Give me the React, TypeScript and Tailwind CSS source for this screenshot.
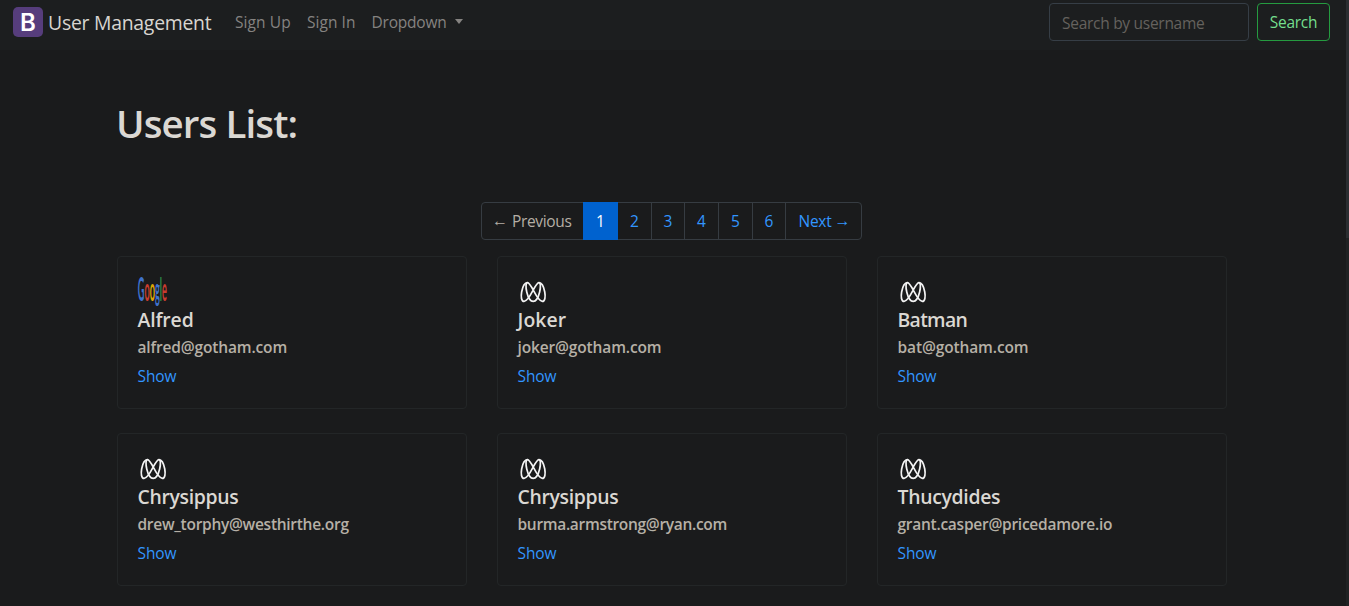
import React from 'react';

type User = { name: string; nameTracking: string; email: string; emailTracking: string; google?: boolean };

const users: User[] = [
  { name: 'Alfred', nameTracking: 'tracking-[-0.13px]', email: 'alfred@gotham.com', emailTracking: 'tracking-[-0.15px]', google: true },
  { name: 'Joker', nameTracking: 'tracking-[0.1px]', email: 'joker@gotham.com', emailTracking: 'tracking-[-0.14px]' },
  { name: 'Batman', nameTracking: 'tracking-[-0.7px]', email: 'bat@gotham.com', emailTracking: 'tracking-[-0.12px]' },
  { name: 'Chrysippus', nameTracking: 'tracking-[-0.32px]', email: 'drew_torphy@westhirthe.org', emailTracking: 'tracking-[-0.28px]' },
  { name: 'Chrysippus', nameTracking: 'tracking-[-0.32px]', email: 'burma.armstrong@ryan.com', emailTracking: 'tracking-[-0.31px]' },
  { name: 'Thucydides', nameTracking: 'tracking-[-0.31px]', email: 'grant.casper@pricedamore.io', emailTracking: 'tracking-[-0.26px]' },
];

function LoopLogo() {
  return (
    <svg viewBox="0 0 30 30" className="block h-[30px] w-[30px]" fill="none" stroke="#f4f4f4" strokeWidth="1.7">
      <path d="M9.5 5.6C13.5 5.6 18.5 24.4 24.3 24.4C29.8 24.4 26.5 5.6 20.9 5.6C16.9 5.6 11.9 24.4 6.1 24.4C.6 24.4 3.9 5.6 9.5 5.6Z" />
      <path d="M9.5 5.6C5.9 5.6 9.2 24.4 15.2 24.4C21.2 24.4 24.5 5.6 20.9 5.6" />
    </svg>
  );
}

function GoogleLogo() {
  return (
    <svg viewBox="0 0 30 30" className="block h-[30px] w-[30px] overflow-visible">
      <text transform="translate(-0.2 23.6) scale(0.285 1)" fontFamily="Lato, sans-serif" fontWeight="700" fontSize="32">
        <tspan fill="#3f73cc">G</tspan>
        <tspan fill="#c93d2f">o</tspan>
        <tspan fill="#d9a406">o</tspan>
        <tspan fill="#3f73cc">g</tspan>
        <tspan fill="#2f9148">l</tspan>
        <tspan fill="#c93d2f">e</tspan>
      </text>
    </svg>
  );
}

function UserCard({ user }: { user: User }) {
  return (
    <article className="h-[153px] rounded border border-[#232627] pl-[19.5px] pr-5 pt-5">
      {user.google ? <GoogleLogo /> : <LoopLogo />}
      <h5 className={`whitespace-nowrap text-[19.4px] font-semibold leading-[26px] text-[#dbd8d3] ${user.nameTracking}`}>{user.name}</h5>
      <h6 className={`mt-[4px] whitespace-nowrap text-[15.5px] font-semibold leading-[20px] text-[#b6b0a6] ${user.emailTracking}`}>{user.email}</h6>
      <a href="#" className="mt-[7px] block w-fit text-[15.5px] leading-6 tracking-[-0.1px] text-[#3296ff]">Show</a>
    </article>
  );
}

function Pagination() {
  const cell = 'flex h-full items-center justify-center border-l border-[#363c42] pt-[2px]';
  return (
    <nav className="ml-[481px] flex h-[38px] w-[381px] items-center rounded border border-[#363c42] text-[15.5px] text-[#3296ff]">
      <span className="flex w-[101px] items-center pl-[10px] pt-[2px] text-[#b5afa5]">
        <span className="mb-[3px] mr-[4px] w-[16px] font-['Liberation_Sans'] text-[16px] leading-5">←</span>
        <span className="tracking-[-0.35px]">Previous</span>
      </span>
      <span className="flex h-[38px] w-[35px] shrink-0 items-center justify-center bg-[#0062cf] pt-[2px] text-white">1</span>
      <a href="#" className="flex h-full w-[33px] items-center justify-center pt-[2px]">2</a>
      <a href="#" className={`${cell} w-[33px]`}>3</a>
      <a href="#" className={`${cell} w-[34px]`}>4</a>
      <a href="#" className={`${cell} w-[34px]`}>5</a>
      <a href="#" className={`${cell} w-[33px]`}>6</a>
      <a href="#" className={`${cell} w-[76px]`}>
        <span className="ml-[2px] tracking-[-0.3px]">Next</span>
        <span className="mb-[3px] ml-[3px] w-[16px] font-['Liberation_Sans'] text-[16px] leading-5">→</span>
      </a>
    </nav>
  );
}

export default function App() {
  return (
    <div className="flex h-[606px] w-full overflow-hidden bg-[#1a1b1c] font-['Open_Sans',sans-serif]">
      <div className="w-[1346px] shrink-0">
        <header className="flex h-[50px] items-start bg-[#1c1e1f] pl-[13px] pt-[3px] text-[15.5px] text-[#858381]">
          <a href="#" className="flex h-[38px] items-center text-[#d8d5d0]">
            <span className="mr-[5px] flex h-[30px] w-[30px] items-center justify-center rounded-[5px] bg-[#563d7c] pt-[2px] font-['Inter'] text-[24px] font-semibold leading-[28px] text-white">B</span>
            <span className="w-[187px] whitespace-nowrap pt-[2px] text-[19.4px] tracking-[-0.25px]">User Management</span>
          </a>
          <nav className="flex h-[38px] items-center whitespace-nowrap pt-[2px]">
            <a href="#" className="w-[72px] tracking-[0.08px]">Sign Up</a>
            <a href="#" className="w-[64.5px] tracking-[0.05px]">Sign In</a>
            <a href="#" className="flex items-center tracking-[-0.2px]">
              Dropdown
              <span className="ml-[8px] mt-[-3px] border-x-[4.5px] border-t-[5px] border-x-transparent border-t-[#858381]" />
            </a>
          </nav>
          <form className="ml-auto mr-4 flex gap-2">
            <input
              aria-label="Search"
              placeholder="Search by username"
              className="h-[38px] w-[200px] rounded border border-[#363e46] bg-transparent px-3 pt-[1px] text-[15.5px] tracking-[-0.28px] outline-none placeholder:text-[#65625e]"
            />
            <button type="button" className="h-[38px] w-[73px] rounded border border-[#259b40] pt-[2px] text-[15.5px] tracking-[-0.28px] text-[#74df8d]">Search</button>
          </form>
        </header>
        <main>
          <h1 className="ml-[116px] mt-[49px] h-[103px] whitespace-nowrap text-[38.5px] font-semibold leading-[48px] tracking-[-0.9px] text-[#dbd8d3]">Users List:</h1>
          <Pagination />
          <section className="ml-[117px] mt-4 grid w-[1110px] grid-cols-3 gap-x-[30px] gap-y-6">
            {users.map((user, i) => (
              <UserCard key={i} user={user} />
            ))}
          </section>
        </main>
      </div>
      <div className="h-full w-[3px] shrink-0 bg-[#202223]">
        <div className="h-[238px] bg-[#2b2e31]" />
      </div>
    </div>
  );
}
